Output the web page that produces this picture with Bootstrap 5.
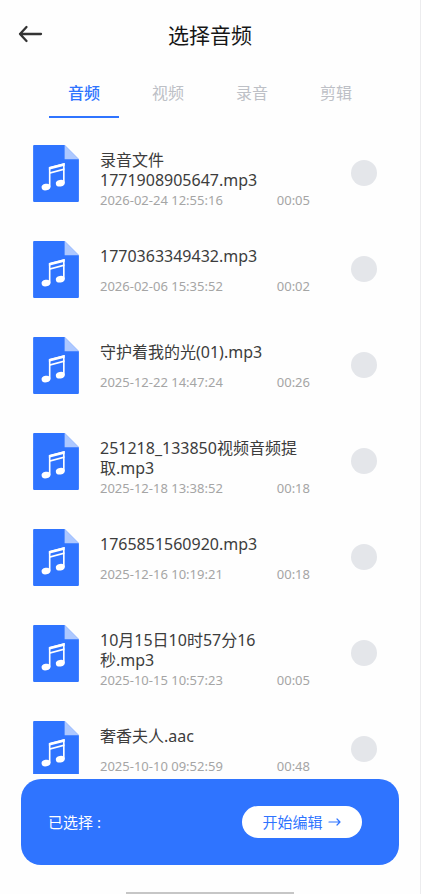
<!DOCTYPE html>
<html lang="zh-CN">
<head>
<meta charset="utf-8">
<meta name="viewport" content="width=device-width, initial-scale=1">
<title>选择音频</title>
<link href="https://cdn.jsdelivr.net/npm/bootstrap@5.3.0/dist/css/bootstrap.min.css" rel="stylesheet">
<style>
  :root { --brand: #2f74ff; }
  body { font-family: "Noto Sans", "Noto Sans CJK SC", sans-serif; background: #fefefe; color: #3c3c3c; border-right: 1px solid #ececee; }
  .top-bar { height: 68px; padding: 0 16px; display: grid; grid-template-columns: 32px 1fr 32px; align-items: center; }
  .top-bar h1 { font: 400 21px/30px "Noto Sans CJK SC", sans-serif; color: #161616; }
  .back-btn { width: 28px; height: 28px; }
  .tab-strip { padding: 0 42px; height: 50px; }
  .tab-strip .nav-item { padding: 0 7px; }
  .tab-strip .nav-link { height: 50px; padding: 10px 0 0; font-size: 16px; line-height: 30px; color: #bdc0c6; border-bottom: 2px solid transparent; }
  .tab-strip .nav-link.active { color: var(--brand); border-color: var(--brand); font-weight: 500; }
  .track-list { margin: 7px 0 5px; min-height: 0; scrollbar-width: none; }
  .track-row { height: 96px; padding: 0 43px 0 33px; }
  .file-icon { width: 46px; height: 57px; margin-right: 21px; }
  .track-text { max-width: 210px; padding-top: 25px; }
  .track-name { min-height: 30px; font-size: 16px; line-height: 20px; padding-right: 4px; }
  .track-meta { font-size: 13px; line-height: 20px; color: #a5a5a5; }
  .track-row .form-check-input { width: 26px; height: 26px; background-color: #e4e6ea; border: 0; }
  .track-row .form-check-input:checked { background-color: var(--brand); }
  .action-bar { margin: 0 21px; height: 86px; padding: 0 37px 0 27px; border-radius: 20px; background: var(--brand); font-size: 15px; }
  .start-btn, .start-btn:hover { width: 120px; height: 32px; background: #fff; color: var(--brand); font-size: 15px; line-height: 20px; }
  .home-line { width: 40%; height: 2px; margin-top: 27px; background: #c6c6c6; }
</style>
<script src="https://cdn.jsdelivr.net/npm/bootstrap@5.3.0/dist/js/bootstrap.bundle.min.js"></script>
</head>
<body class="vh-100 d-flex flex-column overflow-hidden">
<svg class="d-none" aria-hidden="true">
  <symbol id="music-file" viewBox="0 0 45 56">
    <path fill="#2f74ff" d="M1 0H31L45 14V55Q45 56 44 56H1Q0 56 0 55V1Q0 0 1 0Z"/>
    <path fill="#adc8ff" d="M31 0L45 14H31Z"/>
    <path fill="none" stroke="#fff" stroke-width="1.6" d="M16.300 41V22.500L30.200 18.800V37.500"/>
    <path fill="#fff" d="M15.500 21.700L31 17.700V20.300L15.500 24.300ZM16 26.800L30.800 22.900V24.500L16 28.400Z"/>
    <ellipse cx="12.700" cy="41.300" rx="4.400" ry="3.200" fill="#fff" transform="rotate(-10 12.700 41.300)"/>
    <ellipse cx="26.700" cy="37.500" rx="4.400" ry="3.200" fill="#fff" transform="rotate(-10 26.700 37.500)"/>
  </symbol>
</svg>

<header class="top-bar flex-shrink-0">
  <button type="button" class="back-btn btn p-0 border-0 d-flex align-items-center" aria-label="返回">
    <svg width="28" height="20" viewBox="0 0 28 20" fill="none" stroke="#333" stroke-width="2.300" stroke-linecap="round" stroke-linejoin="round"><path d="M25 10H4M10.500 3L4 10L10.500 17"/></svg>
  </button>
  <h1 class="m-0 text-center">选择音频</h1>
</header>

<nav class="tab-strip nav nav-fill flex-nowrap flex-shrink-0" aria-label="类型">
  <div class="nav-item w-25"><a class="nav-link active" aria-current="page" href="#audio">音频</a></div>
  <div class="nav-item w-25"><a class="nav-link" href="#video">视频</a></div>
  <div class="nav-item w-25"><a class="nav-link" href="#record">录音</a></div>
  <div class="nav-item w-25"><a class="nav-link" href="#clip">剪辑</a></div>
</nav>

<main class="track-list flex-fill overflow-auto">
  <div class="track-row d-flex align-items-center">
    <svg class="file-icon flex-shrink-0"><use href="#music-file"/></svg>
    <label class="track-text flex-fill align-self-start" for="t1">
      <span class="track-name d-block">录音文件 1771908905647.mp3</span>
      <span class="track-meta d-flex justify-content-between"><span>2026-02-24 12:55:16</span><span>00:05</span></span>
    </label>
    <input class="form-check-input rounded-circle m-0 ms-auto flex-shrink-0" type="checkbox" id="t1">
  </div>
  <div class="track-row d-flex align-items-center">
    <svg class="file-icon flex-shrink-0"><use href="#music-file"/></svg>
    <label class="track-text flex-fill align-self-start" for="t2">
      <span class="track-name d-block">1770363349432.mp3</span>
      <span class="track-meta d-flex justify-content-between"><span>2026-02-06 15:35:52</span><span>00:02</span></span>
    </label>
    <input class="form-check-input rounded-circle m-0 ms-auto flex-shrink-0" type="checkbox" id="t2">
  </div>
  <div class="track-row d-flex align-items-center">
    <svg class="file-icon flex-shrink-0"><use href="#music-file"/></svg>
    <label class="track-text flex-fill align-self-start" for="t3">
      <span class="track-name d-block">守护着我的光(01).mp3</span>
      <span class="track-meta d-flex justify-content-between"><span>2025-12-22 14:47:24</span><span>00:26</span></span>
    </label>
    <input class="form-check-input rounded-circle m-0 ms-auto flex-shrink-0" type="checkbox" id="t3">
  </div>
  <div class="track-row d-flex align-items-center">
    <svg class="file-icon flex-shrink-0"><use href="#music-file"/></svg>
    <label class="track-text flex-fill align-self-start" for="t4">
      <span class="track-name d-block">251218_133850视频音频提取.mp3</span>
      <span class="track-meta d-flex justify-content-between"><span>2025-12-18 13:38:52</span><span>00:18</span></span>
    </label>
    <input class="form-check-input rounded-circle m-0 ms-auto flex-shrink-0" type="checkbox" id="t4">
  </div>
  <div class="track-row d-flex align-items-center">
    <svg class="file-icon flex-shrink-0"><use href="#music-file"/></svg>
    <label class="track-text flex-fill align-self-start" for="t5">
      <span class="track-name d-block">1765851560920.mp3</span>
      <span class="track-meta d-flex justify-content-between"><span>2025-12-16 10:19:21</span><span>00:18</span></span>
    </label>
    <input class="form-check-input rounded-circle m-0 ms-auto flex-shrink-0" type="checkbox" id="t5">
  </div>
  <div class="track-row d-flex align-items-center">
    <svg class="file-icon flex-shrink-0"><use href="#music-file"/></svg>
    <label class="track-text flex-fill align-self-start" for="t6">
      <span class="track-name d-block">10月15日10时57分16秒.mp3</span>
      <span class="track-meta d-flex justify-content-between"><span>2025-10-15 10:57:23</span><span>00:05</span></span>
    </label>
    <input class="form-check-input rounded-circle m-0 ms-auto flex-shrink-0" type="checkbox" id="t6">
  </div>
  <div class="track-row d-flex align-items-center">
    <svg class="file-icon flex-shrink-0"><use href="#music-file"/></svg>
    <label class="track-text flex-fill align-self-start" for="t7">
      <span class="track-name d-block">奢香夫人.aac</span>
      <span class="track-meta d-flex justify-content-between"><span>2025-10-10 09:52:59</span><span>00:48</span></span>
    </label>
    <input class="form-check-input rounded-circle m-0 ms-auto flex-shrink-0" type="checkbox" id="t7">
  </div>
</main>

<footer class="flex-shrink-0">
  <div class="action-bar d-flex align-items-center justify-content-between text-white">
    <span>已选择 :</span>
    <button type="button" class="start-btn btn rounded-pill border-0 p-0 d-flex align-items-center justify-content-center gap-1">开始编辑
      <svg width="15" height="12" viewBox="0 0 15 12" fill="none" stroke="currentColor" stroke-width="1.200" stroke-linecap="round" stroke-linejoin="round" aria-hidden="true"><path d="M2 6H13M10 3L13 6L10 9"/></svg>
    </button>
  </div>
  <div class="home-line mx-auto"></div>
</footer>
</body>
</html>
